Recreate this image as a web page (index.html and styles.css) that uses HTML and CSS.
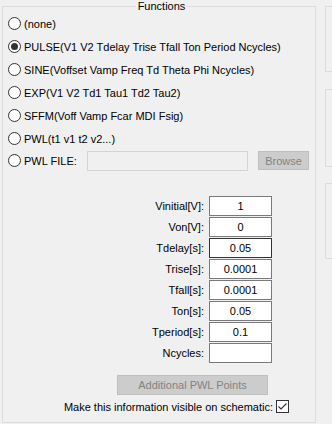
FILE: index.html
```html
<!DOCTYPE html>
<html>
<head>
    <title>Functions</title>
    <link rel="stylesheet" href="styles.css">
</head>
<body>
    <div class="dialog">
        <fieldset class="functions">
            <legend>Functions</legend>

            <label class="opt"><input type="radio" name="fn"><span>(none)</span></label>
            <label class="opt"><input type="radio" name="fn" checked><span>PULSE(V1 V2 Tdelay Trise Tfall Ton Period Ncycles)</span></label>
            <label class="opt"><input type="radio" name="fn"><span>SINE(Voffset Vamp Freq Td Theta Phi Ncycles)</span></label>
            <label class="opt"><input type="radio" name="fn"><span>EXP(V1 V2 Td1 Tau1 Td2 Tau2)</span></label>
            <label class="opt"><input type="radio" name="fn"><span>SFFM(Voff Vamp Fcar MDI Fsig)</span></label>
            <label class="opt"><input type="radio" name="fn"><span>PWL(t1 v1 t2 v2...)</span></label>
            <div class="opt">
                <input type="radio" name="fn">
                <span class="file-label">PWL FILE:</span>
                <input type="text" class="file-input" disabled>
                <button class="btn-disabled browse" disabled>Browse</button>
            </div>

            <div class="params">
                <label for="vinitial">Vinitial[V]:</label>
                <input type="text" id="vinitial" value="1">
                <label for="von">Von[V]:</label>
                <input type="text" id="von" value="0">
                <label for="tdelay">Tdelay[s]:</label>
                <input type="text" id="tdelay" class="focused" value="0.05">
                <label for="trise">Trise[s]:</label>
                <input type="text" id="trise" value="0.0001">
                <label for="tfall">Tfall[s]:</label>
                <input type="text" id="tfall" value="0.0001">
                <label for="ton">Ton[s]:</label>
                <input type="text" id="ton" value="0.05">
                <label for="tperiod">Tperiod[s]:</label>
                <input type="text" id="tperiod" value="0.1">
                <label for="ncycles">Ncycles:</label>
                <input type="text" id="ncycles" value="">
            </div>

            <button class="btn-disabled pwl-points" disabled>Additional PWL Points</button>

            <label class="visible-row">
                <span>Make this information visible on schematic:</span>
                <span class="check">
                    <svg width="11" height="11" viewBox="0 0 11 11">
                        <path d="M1.5 5.5 L4 8 L9.5 2.5" fill="none" stroke="#333" stroke-width="1.1"/>
                    </svg>
                </span>
            </label>
        </fieldset>

        <div class="side">
            <div class="side-box box1"></div>
            <div class="side-box box2"></div>
            <div class="side-box box3"></div>
        </div>
    </div>
</body>
</html>
```

FILE: styles.css
```css
html, body {
    margin: 0;
    padding: 0;
}

body {
    width: 332px;
    height: 424px;
    overflow: hidden;
    background: #f0f0f0;
    font-family: "Liberation Sans", Arial, sans-serif;
    font-size: 11px;
    color: #000;
}

.dialog {
    display: flex;
    align-items: flex-start;
}

.functions {
    box-sizing: border-box;
    flex-shrink: 0;
    width: 314px;
    height: 423px;
    margin: 0 0 0 2px;
    padding: 0 0 0 5px;
    border: 1px solid #dcdcdc;
    min-inline-size: 0;
}

.functions legend {
    margin: 0 auto;
    padding: 0 2px;
    line-height: 13px;
    height: 13px;
}

.opt {
    display: flex;
    align-items: center;
    height: 23px;
}

.opt:first-of-type {
    margin-top: -1px;
}

input[type="radio"] {
    -webkit-appearance: none;
    appearance: none;
    box-sizing: border-box;
    flex-shrink: 0;
    width: 13px;
    height: 13px;
    margin: 0 3px 0 0;
    border: 1px solid #333;
    border-radius: 50%;
    background: #fff;
    display: grid;
    place-content: center;
}

input[type="radio"]:checked::before {
    content: "";
    width: 7px;
    height: 7px;
    border-radius: 50%;
    background: #333;
}

.file-label {
    flex-shrink: 0;
    width: 63px;
}

.file-input {
    box-sizing: border-box;
    flex-shrink: 0;
    width: 161px;
    height: 20px;
    margin: 0;
    border: 1px solid #d4d4d4;
    background: #f0f0f0;
}

.btn-disabled {
    box-sizing: border-box;
    padding: 0;
    border: 1px solid #bfbfbf;
    background: #cccccc;
    color: #838383;
    font-family: "Liberation Sans", Arial, sans-serif;
    font-size: 11px;
}

.browse {
    flex-shrink: 0;
    width: 51px;
    height: 19px;
    margin-left: 10px;
}

.params {
    display: grid;
    grid-template-columns: 196px 63px;
    grid-auto-rows: 20px;
    column-gap: 5px;
    row-gap: 1px;
    margin-top: 24px;
}

.params label {
    text-align: right;
    line-height: 20px;
}

.params input {
    box-sizing: border-box;
    width: 63px;
    height: 20px;
    margin: 0;
    padding: 0;
    border: 1px solid #7a7a7a;
    background: #fff;
    text-align: center;
    font-family: "Liberation Sans", Arial, sans-serif;
    font-size: 11px;
    color: #000;
}

.params input.focused {
    border-color: #333;
}

.pwl-points {
    display: block;
    width: 151px;
    height: 20px;
    margin: 12px 0 0 109px;
}

.visible-row {
    display: flex;
    justify-content: flex-end;
    align-items: center;
    gap: 3px;
    margin: 5px 26px 0 0;
    height: 13px;
}

.check {
    box-sizing: border-box;
    width: 13px;
    height: 13px;
    border: 1px solid #333;
    background: #fff;
    display: flex;
}

.side {
    flex-shrink: 0;
    margin-left: 9px;
    display: flex;
    flex-direction: column;
}

.side-box {
    box-sizing: border-box;
    width: 7px;
    border: 1px solid #dcdcdc;
    border-right: none;
}

.box1 {
    margin-top: 6px;
    height: 66px;
}

.box2 {
    margin-top: 17px;
    height: 78px;
}

.box3 {
    margin-top: 16px;
    height: 76px;
}
```
